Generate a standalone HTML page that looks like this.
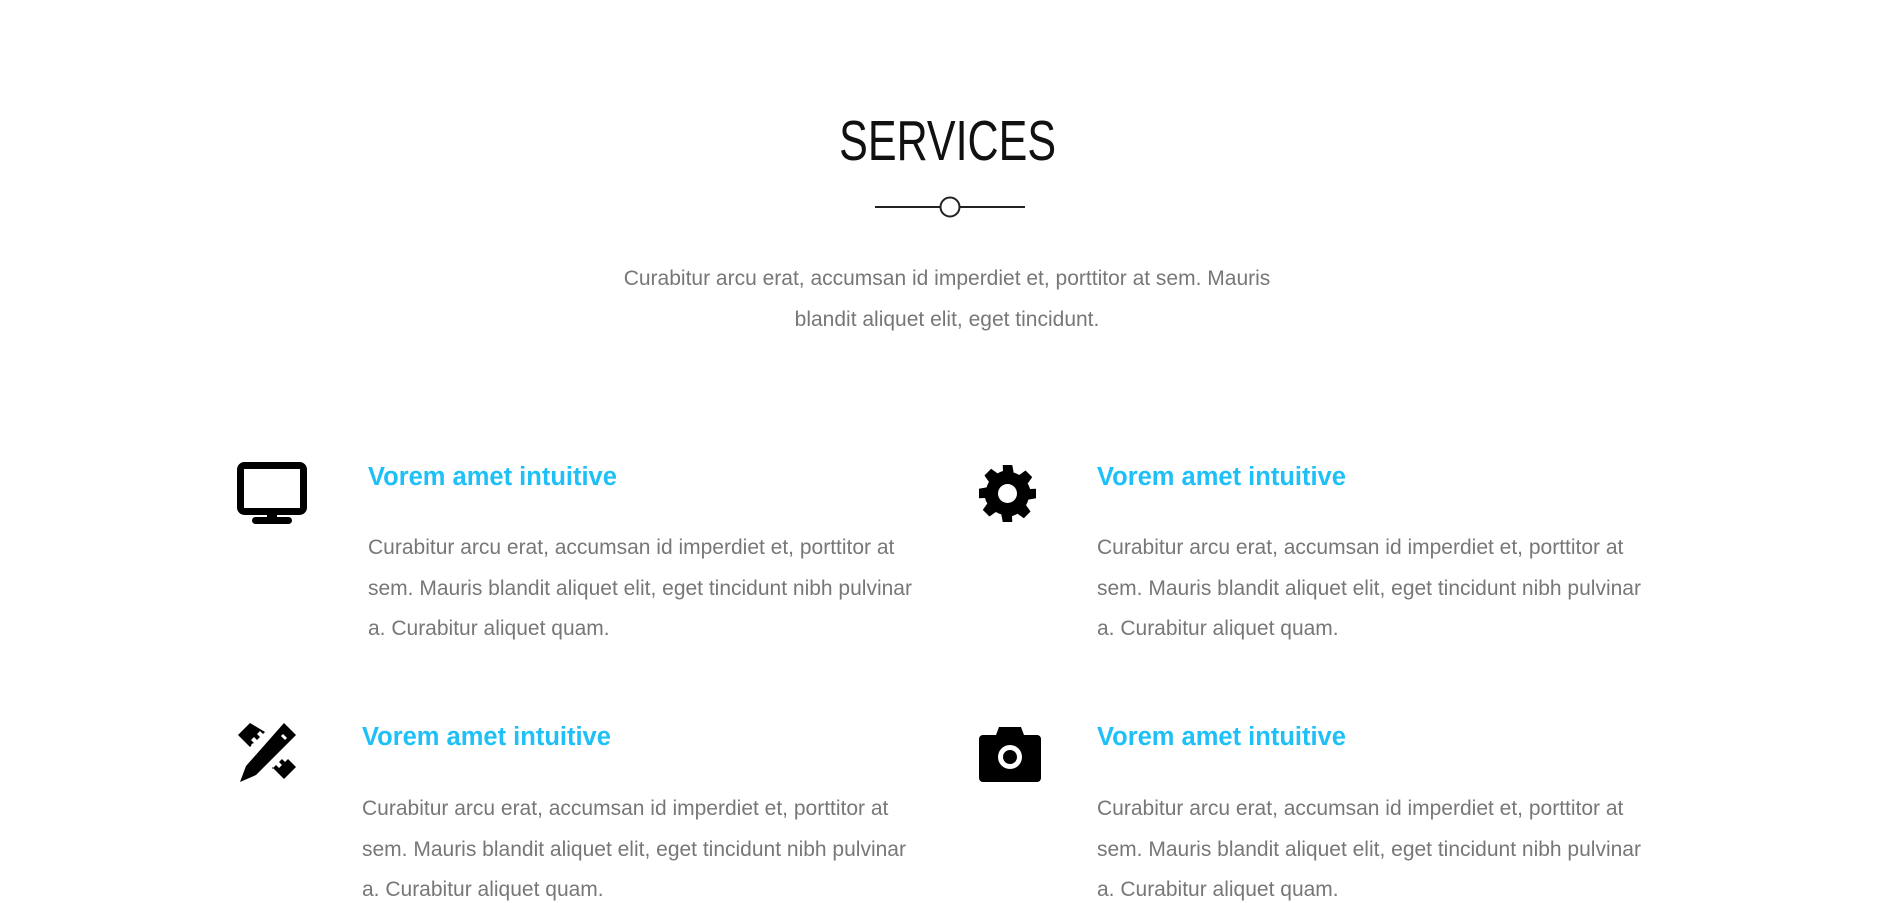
<!DOCTYPE html>
<html><head><meta charset="utf-8"><style>
html,body{margin:0;padding:0;background:#fff;width:1895px;height:903px;overflow:hidden;position:relative;font-family:"Liberation Sans",sans-serif}
.a{position:absolute}
.title{left:0;width:1895px;top:113px;text-align:center;font-size:57px;font-weight:normal;color:#111;line-height:1}
.title span{display:inline-block;transform:scaleX(0.755)}
.intro{left:547px;width:800px;top:258px;text-align:center;color:#777;font-size:21px;line-height:41px}
h3{position:absolute;margin:0;font-size:25.5px;font-weight:bold;color:#1ec0f7;line-height:1}
p{position:absolute;margin:0;font-size:21px;line-height:40.5px;color:#777;width:565px}
</style></head><body>
<div class="a title"><span>SERVICES</span></div>
<svg class="a" style="left:873px;top:195px" width="154" height="24"><line x1="2" y1="12" x2="67" y2="12" stroke="#222" stroke-width="2"/><line x1="87" y1="12" x2="152" y2="12" stroke="#222" stroke-width="2"/><circle cx="77" cy="12" r="9.5" fill="#fff" stroke="#222" stroke-width="2"/></svg>
<div class="a intro">Curabitur arcu erat, accumsan id imperdiet et, porttitor at sem. Mauris<br>blandit aliquet elit, eget tincidunt.</div>

<svg class="a" style="left:237px;top:462px" width="70" height="64" viewBox="0 0 70 64"><rect x="3.5" y="3.5" width="63" height="46" rx="4" fill="none" stroke="#000" stroke-width="7"/><rect x="30" y="50" width="10" height="8" fill="#000"/><rect x="15" y="55" width="40" height="7" rx="3.5" fill="#000"/></svg>
<h3 style="left:368px;top:465px">Vorem amet intuitive</h3>
<p style="left:368px;top:528px">Curabitur arcu erat, accumsan id imperdiet et, porttitor at sem. Mauris blandit aliquet elit, eget tincidunt nibh pulvinar a. Curabitur aliquet quam.</p>

<svg class="a" style="left:979px;top:465px" width="57" height="57" viewBox="0 0 24 24"><path fill="#000" fill-rule="evenodd" d="M10 0h4l.6 3.2a9 9 0 0 1 2.3 1l2.7-1.9 2.8 2.8-1.9 2.7a9 9 0 0 1 1 2.3L24 10v4l-3.2.6a9 9 0 0 1-1 2.3l1.9 2.7-2.8 2.8-2.7-1.9a9 9 0 0 1-2.300 1L14 24h-4l-.6-3.2a9 9 0 0 1-2.3-1l-2.7 1.9-2.8-2.8 1.9-2.7a9 9 0 0 1-1-2.3L0 14v-4l3.2-.6a9 9 0 0 1 1-2.3L2.3 4.4 5.1 1.6l2.7 1.9a9 9 0 0 1 2.3-1zM12 8a4 4 0 1 0 0 8 4 4 0 1 0 0-8z"/></svg>
<h3 style="left:1097px;top:465px">Vorem amet intuitive</h3>
<p style="left:1097px;top:528px">Curabitur arcu erat, accumsan id imperdiet et, porttitor at sem. Mauris blandit aliquet elit, eget tincidunt nibh pulvinar a. Curabitur aliquet quam.</p>

<svg class="a" style="left:236px;top:721px" width="62" height="62" viewBox="0 0 62 62"><g fill="#000"><path d="M48 2l12 12-40 40-16 7 6-16z"/><path d="M14 2L2 14l12 12 4-4-3-3 3-3 3 3 3-3-3-3 3-3 3 3 2-2z"/><path d="M36 48l4-4 3 3 3-3-3-3 3-3 3 3 3-3 8 8-12 12-12-12z"/></g><path d="M22 29l-6-6M46 14l4 4" stroke="#fff" stroke-width="3"/></svg>
<h3 style="left:362px;top:725px">Vorem amet intuitive</h3>
<p style="left:362px;top:789px">Curabitur arcu erat, accumsan id imperdiet et, porttitor at sem. Mauris blandit aliquet elit, eget tincidunt nibh pulvinar a. Curabitur aliquet quam.</p>

<svg class="a" style="left:979px;top:727px" width="62" height="55" viewBox="0 0 62 55"><path fill="#000" fill-rule="evenodd" d="M20 0h22l3 8h13a4 4 0 0 1 4 4v39a4 4 0 0 1-4 4H4a4 4 0 0 1-4-4V12a4 4 0 0 1 4-4h13zM31 18a12 12 0 1 0 0 24 12 12 0 1 0 0-24zM31 23a7 7 0 1 1 0 14 7 7 0 1 1 0-14z"/></svg>
<h3 style="left:1097px;top:725px">Vorem amet intuitive</h3>
<p style="left:1097px;top:789px">Curabitur arcu erat, accumsan id imperdiet et, porttitor at sem. Mauris blandit aliquet elit, eget tincidunt nibh pulvinar a. Curabitur aliquet quam.</p>
</body></html>
